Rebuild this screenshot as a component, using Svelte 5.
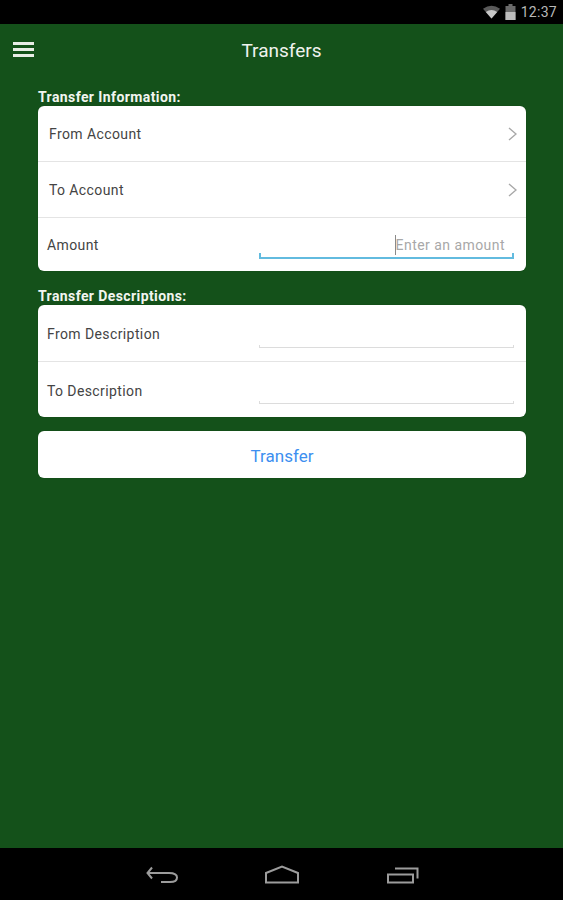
<script>
	const infoRows = [
		{ label: "From Account", indent: "nudge" },
		{ label: "To Account", indent: "nudge" }
	];
	const descRows = ["From Description", "To Description"];
</script>

<div class="screen">
	<div class="status">
		<svg class="wifi" width="17" height="14" viewBox="0 0 18 14">
			<path d="M0 3.5 Q9 -2.5 18 3.5 L9 14 Z" fill="#5a5a5a" />
			<path d="M3 7 Q9 3 15 7 L9 14 Z" fill="#c8c8c8" />
		</svg>
		<svg class="battery" width="11" height="16" viewBox="0 0 10 16">
			<path d="M3 0 H7 V2 H10 V16 H0 V2 H3 Z" fill="#6a6a6a" />
			<rect x="0" y="8" width="10" height="8" fill="#bdbdbd" />
		</svg>
		<span class="time">12:37</span>
	</div>

	<header>
		<div class="burger"><i></i><i></i><i></i></div>
		<h1>Transfers</h1>
	</header>

	<main>
		<h2>Transfer Information:</h2>
		<section class="card first">
			{#each infoRows as row}
				<div class="row link">
					<span class="label {row.indent}">{row.label}</span>
					<svg class="chevron" width="9" height="14" viewBox="0 0 9 14">
						<path d="M1 1 L8 7 L1 13" fill="none" stroke="#a8a8a8" stroke-width="1.4" />
					</svg>
				</div>
			{/each}
			<div class="row amount">
				<span class="label">Amount</span>
				<div class="field active">
					<span class="caret"></span>
					<span class="placeholder">Enter an amount</span>
				</div>
			</div>
		</section>

		<h2 class="second">Transfer Descriptions:</h2>
		<section class="card">
			{#each descRows as label}
				<div class="row desc">
					<span class="label">{label}</span>
					<div class="field"></div>
				</div>
			{/each}
		</section>

		<button type="button">Transfer</button>
	</main>

	<nav>
		<svg width="32" height="20" viewBox="0 0 32 20">
			<path d="M6 3.5 L1.5 9 L6 14.5 M1.5 9 H23 Q31 9 31 13.5 Q31 18 24 18 H15" fill="none" stroke="#9c9c9c" stroke-width="2" />
		</svg>
		<svg width="36" height="20" viewBox="0 0 36 20">
			<path d="M2 9 L18 2.5 L34 9 V18.5 H2 Z" fill="none" stroke="#9c9c9c" stroke-width="2" />
		</svg>
		<svg width="33" height="20" viewBox="0 0 33 20">
			<path d="M2 10.5 H27 V18.5 H2 Z" fill="none" stroke="#9c9c9c" stroke-width="2" />
			<path d="M9 4.5 H31.5 V14.5" fill="none" stroke="#9c9c9c" stroke-width="2" />
		</svg>
	</nav>
</div>

<style>
	:global(body) {
		margin: 0;
		background: #14511a;
	}

	.screen {
		width: 563px;
		height: 900px;
		display: flex;
		flex-direction: column;
		background: #14511a;
		font-family: Roboto, "Liberation Sans", sans-serif;
		overflow: hidden;
	}

	.status {
		height: 24px;
		flex: none;
		background: #000;
		display: flex;
		align-items: center;
		justify-content: flex-end;
		padding-right: 6px;
		box-sizing: border-box;
		color: #b8b8b8;
	}

	.wifi {
		margin-right: 5px;
	}

	.battery {
		margin-right: 5px;
	}

	.time {
		font-size: 14px;
		line-height: 24px;
		letter-spacing: 0.3px;
	}

	header {
		height: 54px;
		flex: none;
		display: flex;
		align-items: center;
		justify-content: center;
		position: relative;
	}

	h1 {
		margin: 0 0 2px;
		font-size: 19px;
		font-weight: 400;
		color: #f0f3ee;
	}

	.burger {
		position: absolute;
		left: 13px;
		top: 18px;
		width: 21px;
		display: flex;
		flex-direction: column;
		gap: 3px;
	}

	.burger i {
		display: block;
		height: 3px;
		background: #e8ede6;
	}

	main {
		flex: 1;
		padding: 0 37px 0 38px;
	}

	h2 {
		margin: 0;
		height: 28px;
		padding-top: 11px;
		box-sizing: border-box;
		font-size: 14px;
		line-height: 17px;
		font-weight: 700;
		letter-spacing: 0.4px;
		color: #f2f5f0;
	}

	h2.second {
		height: 34px;
		padding-top: 17px;
	}

	.card {
		background: #fff;
		border-radius: 6px;
		box-shadow: 0 0 1px #0a3a0e;
	}

	.row {
		display: flex;
		align-items: center;
		justify-content: space-between;
		height: 56px;
		box-sizing: border-box;
		border-top: 1px solid #e4e4e4;
		padding-left: 9px;
		position: relative;
	}

	.row:first-child {
		border-top: none;
		height: 55px;
	}

	.label {
		font-size: 14px;
		letter-spacing: 0.4px;
		color: #444;
	}

	.nudge {
		margin-left: 2px;
		padding-top: 1px;
	}

	.row.link {
		padding-right: 9px;
	}

	.row.amount {
		height: 54px;
		padding-right: 12px;
	}

	.row.desc {
		padding-right: 12px;
		height: 56px;
		align-items: flex-start;
	}

	.row.desc .label {
		margin-top: 21px;
	}

	.field {
		width: 255px;
		box-sizing: border-box;
		border-bottom: 1px solid #dcdcdc;
		border-left: 1px solid #dcdcdc;
		border-right: 1px solid #dcdcdc;
		height: 3px;
		position: absolute;
		right: 12px;
	}

	.row.desc .field {
		bottom: 13px;
	}

	.field.active {
		height: 30px;
		top: 11px;
		border: none;
		border-bottom: 2px solid #62bbdf;
		display: flex;
		align-items: center;
		justify-content: flex-end;
		padding-right: 9px;
		padding-top: 3px;
	}

	.field.active::before,
	.field.active::after {
		content: "";
		position: absolute;
		bottom: 0;
		width: 2px;
		height: 4px;
		background: #62bbdf;
	}

	.field.active::before {
		left: 0;
	}

	.field.active::after {
		right: 0;
	}

	.caret {
		width: 1px;
		height: 20px;
		background: #8a8a8a;
	}

	.placeholder {
		font-size: 14px;
		color: #a8a8a8;
		letter-spacing: 0.45px;
	}

	button {
		display: block;
		width: 100%;
		height: 47px;
		margin-top: 14px;
		border: none;
		border-radius: 6px;
		background: #fff;
		color: #3d8ff0;
		font-family: inherit;
		font-size: 17px;
		padding: 2px 0 0;
		box-shadow: 0 0 1px #0a3a0e;
	}

	nav {
		height: 52px;
		flex: none;
		background: #000;
		display: flex;
		align-items: center;
		padding-left: 146px;
		gap: 86px;
	}
</style>
